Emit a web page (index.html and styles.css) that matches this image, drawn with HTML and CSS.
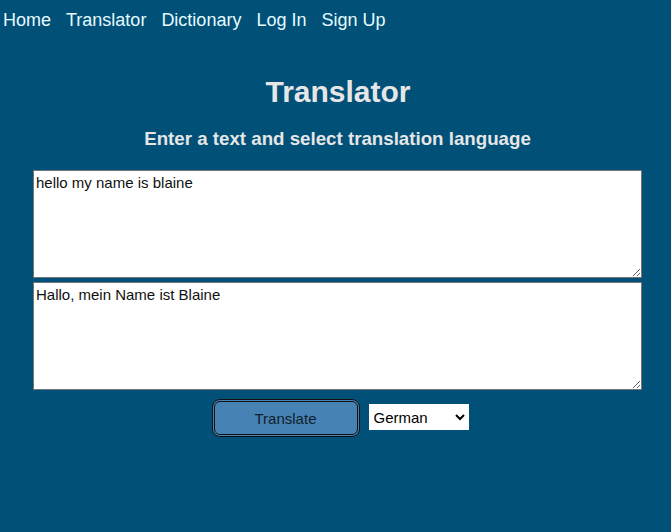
FILE: index.html
```html
<!DOCTYPE html>
<html>
<head>
<meta charset="utf-8">
<link rel="stylesheet" href="styles.css">
</head>
<body>
<nav class="nav">
  <a href="#">Home</a>
  <a href="#">Translator</a>
  <a href="#">Dictionary</a>
  <a href="#">Log In</a>
  <a href="#">Sign Up</a>
</nav>
<main class="main">
  <h1 class="title">Translator</h1>
  <h2 class="subtitle">Enter a text and select translation language</h2>
  <div class="areas">
    <textarea class="box">hello my name is blaine</textarea>
    <textarea class="box">Hallo, mein Name ist Blaine</textarea>
  </div>
  <div class="controls">
    <button class="btn">Translate</button>
    <select class="lang">
      <option>German</option>
      <option>French</option>
      <option>Spanish</option>
    </select>
  </div>
</main>
</body>
</html>
```
FILE: styles.css
```css
html, body {
  margin: 0;
  padding: 0;
  background: #005078;
  font-family: "Liberation Sans", Arial, sans-serif;
  height: 100%;
}
.nav {
  display: flex;
  gap: 15px;
  padding: 9px 0 0 3px;
  height: 31px;
}
.nav a {
  color: #e6fbff;
  text-decoration: none;
  font-size: 18px;
  line-height: 22px;
}
.main {
  display: flex;
  flex-direction: column;
  align-items: center;
  padding-left: 4px;
}
.title {
  margin: 35px 0 0 1px;
  font-size: 30px;
  line-height: 34px;
  color: #e6e6e6;
  font-weight: bold;
}
.subtitle {
  margin: 19px 0 0 0;
  font-size: 18.72px;
  line-height: 22px;
  color: #e6e6e6;
}
.areas {
  display: flex;
  flex-direction: column;
  gap: 4px;
  margin-top: 20px;
}
.box {
  width: 609px;
  height: 108px;
  box-sizing: border-box;
  margin: 0;
  padding: 3px 2px;
  font-family: "Liberation Sans", Arial, sans-serif;
  font-size: 15px;
  color: #111;
  border: 1px solid #767676;
  background: #fff;
}
.controls {
  display: flex;
  align-items: center;
  gap: 9px;
  margin-top: 9px;
  margin-left: 5px;
}
.btn {
  width: 148px;
  height: 38px;
  background: #4682b4;
  border: 3px double #111;
  border-radius: 8px;
  color: #0f1e2c;
  font-family: "Liberation Sans", Arial, sans-serif;
  font-size: 15px;
}
.lang {
  width: 100px;
  height: 26px;
  margin-top: -2px;
  font-family: "Liberation Sans", Arial, sans-serif;
  font-size: 15px;
  background: #fff;
  color: #000;
  border: 1px solid #fff;
}
```
